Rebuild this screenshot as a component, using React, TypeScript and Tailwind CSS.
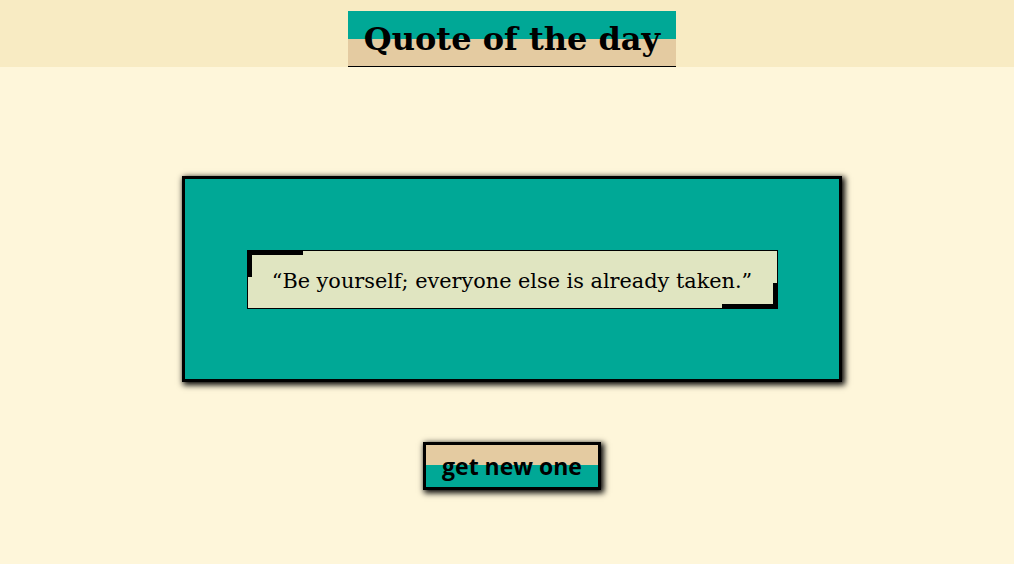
export default function App() {
  return (
    <div className="min-h-[564px] w-full bg-[#fef6da]">
      <header className="flex h-[67px] justify-center bg-[#f8ebc3] pl-[10px] pt-[11px]">
        <h1
          className="flex h-[56px] items-center border-b border-black bg-[linear-gradient(to_bottom,#00a896_50%,#e4cba1_50%)] px-[16px] text-[32px] font-bold leading-none text-black"
          style={{ fontFamily: '"DejaVu Serif", serif' }}
        >
          Quote of the day
        </h1>
      </header>
      <main className="flex flex-col items-center pl-[10px] pt-[109px]">
        <div className="flex h-[206px] w-[660px] items-center justify-center border-[3px] border-black bg-[#00a896] shadow-[2px_2px_6px_1px_#000]">
          <div className="relative w-[531px] border border-black bg-[#e0e5c1] px-[20px] pb-[13px] pt-[17px] text-center before:absolute before:left-[-1px] before:top-[-1px] before:h-[27px] before:w-[56px] before:border-l-[5px] before:border-t-[5px] before:border-black before:content-[''] after:absolute after:bottom-[-1px] after:right-[-1px] after:h-[26px] after:w-[56px] after:border-b-[5px] after:border-r-[5px] after:border-black after:content-['']">
            <p
              className="text-[20.8px] leading-[27px] text-black"
              style={{ fontFamily: '"DejaVu Serif", serif' }}
            >
              “Be yourself; everyone else is already taken.”
            </p>
          </div>
        </div>
        <button
          className="mt-[60px] h-[48px] border-[3px] border-black bg-[linear-gradient(to_bottom,#e4cba1_48%,#00a896_48%)] px-[16px] text-[23px] font-bold text-black shadow-[2px_2px_6px_1px_#000]"
          style={{ fontFamily: '"Open Sans", sans-serif' }}
        >
          get new one
        </button>
      </main>
    </div>
  );
}
